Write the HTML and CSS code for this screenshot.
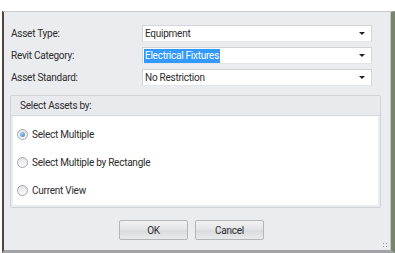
FILE: index.html
```html
<!DOCTYPE html>
<html lang="en">
<head>
    <meta charset="UTF-8">
    <meta name="viewport" content="width=device-width, initial-scale=1.0">
    <title>Select Assets</title>
    <link rel="stylesheet" href="styles.css">
</head>
<body>

<div class="desktop">
    <div class="window">
        <div class="dialog">

            <div class="field-row">
                <label class="field-label">Asset Type:</label>
                <div class="combo">
                    <span class="combo-text">Equipment</span>
                    <span class="combo-arrow"></span>
                </div>
            </div>

            <div class="field-row">
                <label class="field-label">Revit Category:</label>
                <div class="combo">
                    <span class="combo-text selected">Electrical Fixtures</span>
                    <span class="combo-arrow"></span>
                </div>
            </div>

            <div class="field-row">
                <label class="field-label">Asset Standard:</label>
                <div class="combo">
                    <span class="combo-text">No Restriction</span>
                    <span class="combo-arrow"></span>
                </div>
            </div>

            <div class="group">
                <div class="group-header">Select Assets by:</div>
                <div class="group-body">
                    <div class="radio-row">
                        <span class="radio checked"></span>
                        <span>Select Multiple</span>
                    </div>
                    <div class="radio-row">
                        <span class="radio"></span>
                        <span>Select Multiple by Rectangle</span>
                    </div>
                    <div class="radio-row">
                        <span class="radio"></span>
                        <span>Current View</span>
                    </div>
                </div>
            </div>

            <div class="button-row">
                <button class="dlg-button">OK</button>
                <button class="dlg-button">Cancel</button>
            </div>

            <span class="grip"></span>
        </div>
    </div>
</div>

</body>
</html>
```

FILE: styles.css
```css
body {
    margin: 0;
    background: #fff;
    font-family: 'Roboto', 'Noto Sans', sans-serif;
    font-size: 10px;
    letter-spacing: -0.25px;
    color: #2b2b2b;
}

.desktop {
    width: 395px;
    height: 253px;
    padding: 11px 0 0 2px;
    box-sizing: border-box;
    overflow: hidden;
}

.window {
    height: 242px;
    border-left: 2px solid #54443e;
    border-top: 1px solid #c9cacd;
    border-right: 4px solid #75866a;
    border-bottom: 3px solid #a3a3a5;
    box-sizing: border-box;
    background: #c4c5c8;
}

.dialog {
    position: relative;
    height: 100%;
    box-sizing: border-box;
    margin-right: 1px;
    background: #ebecf0;
    padding: 13px 0 0 7px;
}

.field-row {
    display: flex;
    align-items: center;
    height: 17px;
    margin-bottom: 5px;
}

.field-label {
    width: 131px;
}

.combo {
    width: 230px;
    height: 17px;
    box-sizing: border-box;
    background: #fff;
    border: 1px solid #d3d4d8;
    border-bottom-color: #e4e5e8;
    display: flex;
    align-items: center;
    justify-content: space-between;
    padding: 0 6px 0 1px;
}

.combo-text {
    line-height: 14px;
    padding: 0 1px;
}

.combo-text.selected {
    background: #3399ff;
    color: #fff;
}

.combo-arrow {
    width: 0;
    height: 0;
    border-left: 3px solid transparent;
    border-right: 3px solid transparent;
    border-top: 3px solid #222;
}

.group {
    margin: 9px 0 0 -1px;
    width: 371px;
    border: 1px solid #d2d3d7;
    border-radius: 2px;
    box-sizing: border-box;
}

.group-header {
    height: 19px;
    line-height: 19px;
    padding-left: 9px;
    background: #e9eaee;
    border-bottom: 1px solid #d6d7db;
}

.group-body {
    background: #fff;
    margin: 0 2px 2px 2px;
    height: 89px;
    padding-top: 10px;
    box-sizing: border-box;
}

.radio-row {
    display: flex;
    align-items: center;
    height: 16px;
    margin-bottom: 12px;
    padding-left: 4px;
    gap: 4px;
}

.radio {
    width: 9px;
    height: 9px;
    border-radius: 50%;
    border: 1px solid #a6a8ad;
    background: linear-gradient(#e4e5e8, #fafafa);
    position: relative;
}

.radio.checked::after {
    content: "";
    position: absolute;
    left: 2px;
    top: 2px;
    width: 5px;
    height: 5px;
    border-radius: 50%;
    background: radial-gradient(circle at 40% 35%, #a9cdf3, #3c78c8);
}

.button-row {
    display: flex;
    gap: 7px;
    margin: 12px 0 0 108px;
}

.dlg-button {
    width: 69px;
    height: 20px;
    font-family: inherit;
    font-size: 10px;
    letter-spacing: -0.25px;
    color: #2b2b2b;
    border: 1px solid #b3b5ba;
    border-radius: 2px;
    background: linear-gradient(#f2f2f4 0%, #e4e5e8 45%, #dadbdf 55%, #e9eaec 100%);
    padding: 0;
}

.grip {
    position: absolute;
    right: 2px;
    bottom: 2px;
    width: 6px;
    height: 6px;
    background:
        radial-gradient(circle, #9a9ba0 0.8px, transparent 1px) 0 0 / 3px 3px;
}
```
